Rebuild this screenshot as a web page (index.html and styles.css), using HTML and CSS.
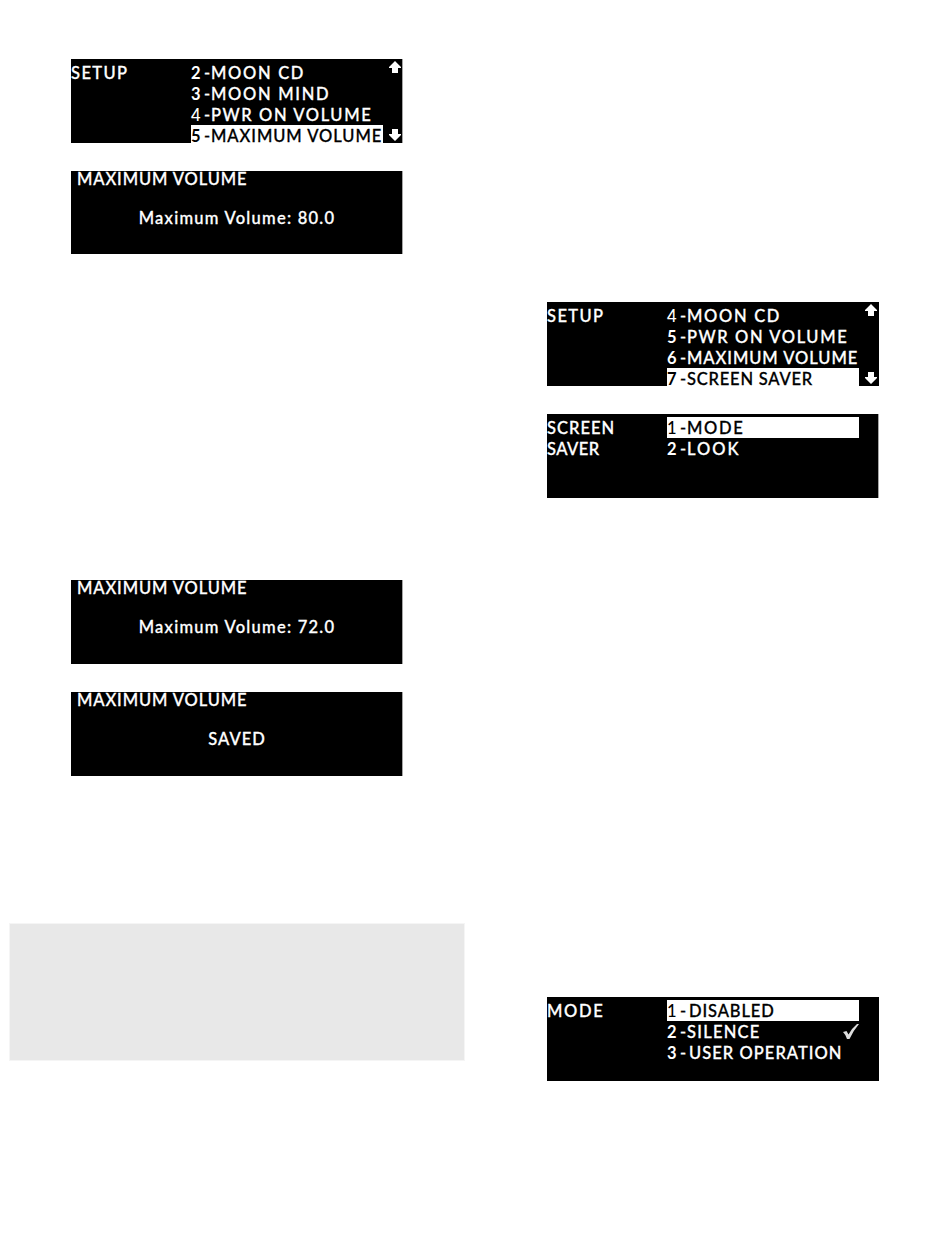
FILE: index.html
```
<!DOCTYPE html>
<html lang="en">
<head>
<meta charset="utf-8">
<title>Setup displays</title>
<link rel="stylesheet" href="styles.css">
</head>
<body>
<main class="page">
  <div class="col col-left">
    <section class="screen menu edge">
      <div class="heading"><p class="t-setup">SETUP</p></div>
      <ul class="list">
        <li><b>2</b><i>-</i><span class="t-cd">MOON CD</span></li>
        <li><b>3</b><i>-</i><span class="t-mind">MOON MIND</span></li>
        <li><b class="thin">4</b><i>-</i><span class="t-pwr">PWR ON VOLUME</span></li>
        <li class="selected last"><b>5</b><i>-</i><span class="t-max">MAXIMUM VOLUME</span></li>
      </ul>
      <div class="arrows">
        <svg width="12" height="12" viewBox="0 0 12 12"><path d="M6 0L12 6V7H9V12H3V7H0V6Z"/></svg>
        <svg width="12" height="12" viewBox="0 0 12 12"><path d="M6 12L0 6V5H3V0H9V5H12V6Z"/></svg>
      </div>
    </section>
    <section class="screen message edge short">
      <h2>MAXIMUM VOLUME</h2>
      <p class="t-value">Maximum Volume: 80.0</p>
    </section>
    <section class="screen message edge third">
      <h2>MAXIMUM VOLUME</h2>
      <p class="t-value">Maximum Volume: 72.0</p>
    </section>
    <section class="screen message edge">
      <h2>MAXIMUM VOLUME</h2>
      <p class="t-saved">SAVED</p>
    </section>
    <aside class="note"></aside>
  </div>
  <div class="col col-right">
    <section class="screen menu">
      <div class="heading"><p class="t-setup">SETUP</p></div>
      <ul class="list">
        <li><b class="thin">4</b><i>-</i><span class="t-cd">MOON CD</span></li>
        <li><b>5</b><i>-</i><span class="t-pwr">PWR ON VOLUME</span></li>
        <li><b>6</b><i>-</i><span class="t-max">MAXIMUM VOLUME</span></li>
        <li class="selected last"><b>7</b><i>-</i><span class="t-saver">SCREEN SAVER</span></li>
      </ul>
      <div class="arrows">
        <svg width="12" height="12" viewBox="0 0 12 12"><path d="M6 0L12 6V7H9V12H3V7H0V6Z"/></svg>
        <svg width="12" height="12" viewBox="0 0 12 12"><path d="M6 12L0 6V5H3V0H9V5H12V6Z"/></svg>
      </div>
    </section>
    <section class="screen menu edge">
      <div class="heading"><p class="t-screen">SCREEN</p><p class="t-sav">SAVER</p></div>
      <ul class="list">
        <li class="selected"><b class="thin">1</b><i>-</i><span class="t-mode">MODE</span></li>
        <li><b>2</b><i>-</i><span class="t-look">LOOK</span></li>
      </ul>
    </section>
    <section class="screen menu mode">
      <div class="heading"><p class="t-mode">MODE</p></div>
      <ul class="list">
        <li class="selected"><b class="thin">1</b><i>-</i><span class="t-dis">DISABLED</span></li>
        <li><b>2</b><i>-</i><span class="t-sil">SILENCE</span><svg class="check" width="16" height="16" viewBox="0 0 16 16"><path d="M0 8L3.5 7L5.5 10.5Q9 4 14 0H16Q10 7 6.5 15H4Q3 11 0 8Z"/></svg></li>
        <li><b>3</b><i>-</i><span class="t-user">USER OPERATION</span></li>
      </ul>
    </section>
  </div>
</main>
</body>
</html>
```
FILE: styles.css
```
* { box-sizing: border-box; margin: 0; padding: 0; }
body { background: #fff; font-family: Lato, "Open Sans", sans-serif; font-weight: 500; font-size: 16.5px; line-height: 21px; letter-spacing: 1px; color: #fff; -webkit-text-stroke: 0.3px currentColor; }
.page { display: grid; grid-template-columns: 476px 474px; height: 1260px; }
.col { display: flex; flex-direction: column; gap: 28px; }
.col-left { padding: 59px 0 0 71px; }
.col-right { padding: 302px 0 0 71px; }
.screen { width: 332px; height: 84px; flex: none; background: #000; overflow: hidden; white-space: nowrap; }
.edge { border-right: 1px solid #a5a5a5; }
.short { height: 83px; }
.third { margin-top: 298px; }
.menu { display: grid; grid-template-columns: 120px 192px 1fr; padding-top: 3px; }
.mode { margin-top: 471px; }
.heading { padding-top: 1px; }
.list { list-style: none; }
.list li { display: grid; grid-template-columns: 13px 7px 1fr auto; height: 21px; padding-top: 1px; line-height: 21px; }
.list .last { height: 18px; line-height: 20px; }
.list b { font-weight: 700; -webkit-text-stroke: 0; }
.list .thin { font-weight: 500; }
.list i { font-style: normal; }
.list .selected { background: #fff; color: #000; }
.arrows { display: flex; flex-direction: column; justify-content: space-between; height: 80px; margin: -1px 0 0 6px; }
svg { display: block; fill: #fff; }
.check { fill: #ddd; margin-top: 2px; }
.message h2 { font-size: inherit; font-weight: inherit; line-height: 17px; padding-left: 6px; letter-spacing: 0.9px; }
.message p { text-align: center; margin-top: 20px; padding-left: 1px; }
.t-setup { letter-spacing: 1.4px; }
.t-cd, .t-mind { letter-spacing: 1.7px; }
.t-pwr { letter-spacing: 1.6px; }
.list .t-max { letter-spacing: 0.95px; margin-right: -3px; }
.t-value { letter-spacing: 1.25px; }
.t-saver { letter-spacing: 0.8px; }
.t-sav { letter-spacing: 0.5px; }
.t-mode { letter-spacing: 1.7px; }
.t-look { letter-spacing: 2px; }
.t-dis { letter-spacing: 0.9px; padding-left: 2px; }
.t-sil { letter-spacing: 1.25px; }
.t-user { letter-spacing: 1.05px; padding-left: 2px; }
.note { width: 456px; height: 138px; margin: 119px 0 0 -62px; background: #e8e8e8; border: 1px solid #f5f5f5; }
```
